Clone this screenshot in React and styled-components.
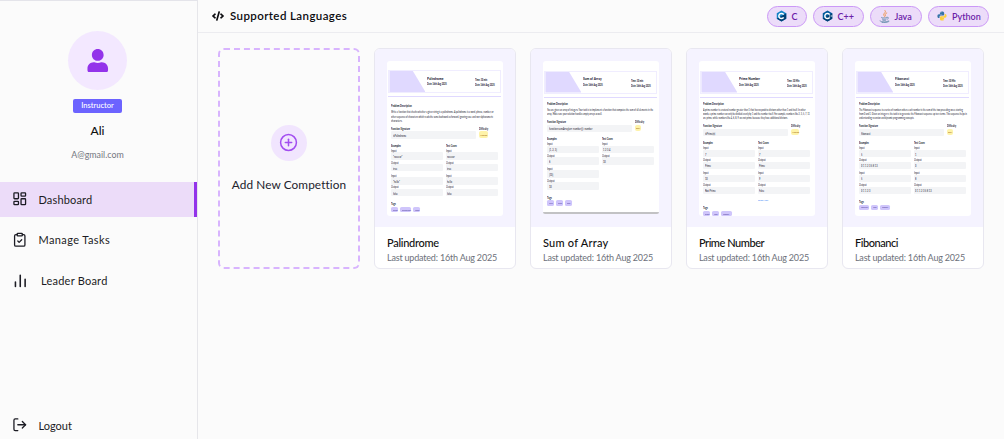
import React from "react";
import styled, { createGlobalStyle } from "styled-components";
import { LayoutDashboard, ClipboardCheck, LogOut, CirclePlus } from "lucide-react";
import { FaUser, FaCode } from "react-icons/fa";

const GlobalStyle = createGlobalStyle`
  * { box-sizing: border-box; }
  body {
    margin: 0;
    background: #fbfbfb;
    font-family: Lato, "Liberation Sans", sans-serif;
    font-variant-ligatures: none;
    color: #1a1a22;
  }
`;

const Page = styled.div`
  display: flex;
  width: 100%;
  height: 439px;
  overflow: hidden;
`;

/* Sidebar */
const Sidebar = styled.aside`
  display: flex;
  flex-direction: column;
  width: 198px;
  flex: none;
  border-top: 1px solid #e4e4ea;
  border-right: 1px solid #e6e6ea;
`;
const Profile = styled.div`
  display: flex;
  flex-direction: column;
  align-items: center;
  height: 181px;
  padding: 30px 2px 0 0;
`;
const Avatar = styled.div`
  display: grid;
  place-items: center;
  width: 59px;
  height: 59px;
  border-radius: 50%;
  background: #f3e8ff;
  color: #9333ea;
`;
const Role = styled.span`
  width: 49px;
  height: 14px;
  margin-top: 9px;
  border-radius: 2px;
  background: #6c63ff;
  color: #fff;
  font-size: 7.5px;
  font-weight: 500;
  line-height: 14px;
  text-align: center;
`;
const Name = styled.strong`
  margin-top: 10px;
  font-size: 12px;
  font-weight: 500;
  line-height: 16px;
  color: #111;
`;
const Email = styled.span`
  margin-top: 10px;
  font-size: 8.9px;
  line-height: 12px;
  color: #74777f;
`;
const Nav = styled.nav`
  display: flex;
  flex-direction: column;
  gap: 5.5px;
  flex: 1;
`;
const NavItem = styled.a`
  display: flex;
  align-items: center;
  gap: ${(p) => p.$gap || 11}px;
  height: 35px;
  padding: 0 0 1px 12px;
  font-size: 11px;
  letter-spacing: ${(p) => p.$ls || 0}px;
  color: #1c1c24;
  background: ${(p) => (p.$active ? "#ecdcf9" : "transparent")};
  border-right: 3px solid ${(p) => (p.$active ? "#9333ea" : "transparent")};
  svg { flex: none; }
`;
const Footer = styled.div`
  height: 31px;
`;

/* Main column */
const Main = styled.main`
  flex: 1;
  display: flex;
  flex-direction: column;
`;
const TopBar = styled.header`
  display: flex;
  align-items: center;
  justify-content: space-between;
  height: 33px;
  padding: 0 15px 0 14px;
  border-bottom: 1px solid #ececf0;
`;
const Heading = styled.h1`
  display: flex;
  align-items: center;
  gap: 6px;
  margin: 0;
  font-size: 11.5px;
  font-weight: 600;
  line-height: 14px;
  padding-bottom: 1px;
  letter-spacing: 0.4px;
  color: #0c0c10;
`;
const Languages = styled.div`
  display: flex;
  gap: 6px;
`;
const Pill = styled.span`
  display: flex;
  align-items: center;
  gap: 5px;
  width: ${(p) => p.$w}px;
  height: 21px;
  padding-left: 8px;
  border: 1px solid #cb98f7;
  border-radius: 11px;
  background: #ecdcf9;
  color: #6b21a8;
  font-size: 9px;
  font-weight: 600;
  white-space: nowrap;
`;
const Grid = styled.section`
  display: grid;
  grid-template-columns: repeat(5, 141.2px);
  column-gap: 14.8px;
  padding: 15px 0 0 20.4px;
`;
const AddCard = styled.button`
  display: flex;
  flex-direction: column;
  align-items: center;
  height: 221px;
  padding: 74.5px 0 0;
  border: 2px dashed #d8b4fe;
  border-radius: 6px;
  background: transparent;
  font: 11.8px Lato, sans-serif;
  letter-spacing: 0.1px;
  color: #22222c;
  white-space: nowrap;
`;
const PlusCircle = styled.span`
  display: grid;
  place-items: center;
  width: 36px;
  height: 36px;
  margin-bottom: 16px;
  border-radius: 50%;
  background: #f1e5fe;
  color: #a24df0;
`;
const Card = styled.article`
  height: 221px;
  border: 1px solid #e8e7f0;
  border-radius: 6px;
  background: #fff;
  overflow: hidden;
`;
const Preview = styled.div`
  height: 178px;
  padding: 12px 11.6px;
  background: #f5f3ff;
`;
const CardTitle = styled.h2`
  margin: 9px 0 0 11.6px;
  font-size: 11px;
  font-weight: 500;
  line-height: 14px;
  letter-spacing: ${(p) => p.$ls || 0}px;
  color: #111;
`;
const Updated = styled.p`
  margin: 2px 0 0 11.6px;
  font-size: 9px;
  line-height: 12px;
  letter-spacing: -0.19px;
  color: #6d717a;
  white-space: nowrap;
`;

/* Miniature problem sheet */
const Sheet = styled.div`
  height: ${(p) => (p.$edge ? 153 : 154.5)}px;
  padding: ${(p) => p.$top}px 1.5px 0;
  border-radius: ${(p) => (p.$edge ? "3px 3px 2px 2px" : "3px")};
  border-bottom: ${(p) => (p.$edge ? "2px solid #c2c2c4" : "none")};
  background: #fff;
  overflow: hidden;
  color: #2a2838;
`;
const Banner = styled.div`
  display: flex;
  height: 23px;
  border: 1px solid #f0edff;
`;
const Slant = styled.div`
  width: 36px;
  background: #e0d9ff;
  clip-path: polygon(0 0, 65% 0, 100% 100%, 0 100%);
`;
const BannerCol = styled.div`
  width: ${(p) => p.$w}px;
  padding: ${(p) => p.$top}px 0 0 ${(p) => p.$left}px;
`;
const Line = styled.div`
  height: ${(p) => p.$h || 4.2}px;
  line-height: ${(p) => p.$h || 4.2}px;
  font-size: ${(p) => p.$size || 3.2}px;
  font-weight: ${(p) => (p.$bold ? 900 : 500)};
  white-space: nowrap;
  width: max-content;
  transform: scaleX(${(p) => p.$sx || 0.82});
  transform-origin: left;
  color: ${(p) => p.$color || "inherit"};
`;
const Rule = styled.div`
  height: 1px;
  margin-top: 3px;
  background: #e0d9ff;
`;
const SheetBody = styled.div`
  padding: ${(p) => p.$top}px 3px 0;
`;
const Description = styled.div`
  margin-top: 1.8px;
`;
const Signature = styled.div`
  display: grid;
  grid-template-columns: 85px 10px;
  column-gap: 2.3px;
  margin-top: 3.6px;
`;
const Field = styled.div`
  height: 7.4px;
  padding: 2.8px 0 0 1.3px;
  border-radius: 1px;
  background: #f3f4f6;
`;
const Level = styled.div`
  width: ${(p) => p.$w}px;
  height: 6.6px;
  padding: 2.4px 0 0 1.3px;
  border-radius: 2px;
  background: #fef3a9;
`;
const Cases = styled.div`
  display: grid;
  grid-template-columns: 52px 52px;
  column-gap: 2.3px;
  margin-top: 5px;
`;
const CaseBlock = styled.div`
  margin-top: ${(p) => p.$top}px;
`;
const Tags = styled.div`
  display: flex;
  gap: 2px;
`;
const Tag = styled.span`
  width: ${(p) => p.$w}px;
  height: 5.4px;
  padding: 1.5px 0 0 1.4px;
  border-radius: 1.6px;
  background: #cfc5fb;
`;
const TagArea = styled.div`
  margin-top: ${(p) => p.$top}px;
`;

const HexLogo = ({ plus }) => (
  <svg width="11" height="12" viewBox="0 0 22 24">
    <path d="M11 1 20.5 6.5v11L11 23 1.5 17.5v-11z" fill={plus ? "#00599c" : "#1684c7"} />
    <path d="M1.5 17.5 20.5 6.5v11L11 23z" fill="#003f74" />
    <path d="M15.3 9.2a5.2 5.2 0 1 0 0 5.6" fill="none" stroke="#fff" strokeWidth="3" />
    {plus && <path d="M14 12h3m1 0h3M15.500 10.500v3m4-3v3" stroke="#fff" strokeWidth="1" />}
  </svg>
);
const JavaLogo = () => (
  <svg width="11" height="13" viewBox="0 0 22 26" fill="none" strokeLinecap="round">
    <path d="M12 1c4 4-5 6-2 10 1 1 1.500 2 1 3M15.500 6c-5 2-3 4-2 6" stroke="#ee8b34" strokeWidth="1.700" />
    <path d="M5 15c3 1.500 8 1.200 11 0M6.500 18c2 1 6 1 8 0M7.500 20.500c2 .8 4.500.8 6 0M17 14.500c4 0 2 3-.5 4M2 22c3 2.500 14 2.500 17 0M6 25c5 .6 11 0 14-2" stroke="#5382a1" strokeWidth="1.400" />
  </svg>
);
const PythonLogo = () => (
  <svg width="10" height="10" viewBox="0 0 24 24">
    <path fill="#3674a8" d="M12 1c-4.500 0-5 1.800-5 3.500V7h5.300v1H4.500C2 8 1 10 1 12.500S2.200 17 4.200 17H6v-2.600C6 12.500 7.600 11 9.500 11h5c1.500 0 2.700-1.200 2.700-2.700V4.500C17.200 2.500 15.500 1 12 1z" />
    <circle cx="9.300" cy="4" r="1" fill="#fff" />
    <path fill="#fccf3d" d="M12 23c4.500 0 5-1.800 5-3.500V17h-5.300v-1h7.800c2.500 0 3.500-2 3.500-4.500S21.800 7 19.800 7H18.400v2.600c0 1.900-1.600 3.200-3.500 3.200h-5c-1.500 0-2.700 1.200-2.700 2.700v4C7.200 21.500 8.500 23 12 23z" />
    <circle cx="14.700" cy="20" r="1" fill="#fff" />
  </svg>
);
const BarsIcon = () => (
  <svg width="15" height="15" viewBox="0 0 24 24" stroke="currentColor" strokeWidth="2.500" strokeLinecap="round">
    <path d="M5.500 21.500v-7M13.200 21.500V3.500M21 21.500V10" />
  </svg>
);

const problems = [
  {
    title: "Palindrome", ls: -0.28, time: "Time: 30 min", date: "Date: 16th Aug 2025", top: 9, bodyTop: 7.3, sx: [0.705, 0.705, 0.78],
    text: [
      "Write a function that checks whether a given string is a palindrome. A palindrome is a word, phrase, number, or",
      "other sequence of characters which reads the same backward as forward, ignoring case and non-alphanumeric",
      "characters.",
    ],
    signature: "isPalindrome", level: "Medium", levelW: 9,
    left: [["Input", '"racecar"'], ["Output", "true"], ["Input", '"hello"'], ["Output", "false"]],
    right: [["Input", "racecar"], ["Output", "true"], ["Input", "hello"], ["Output", "false"]],
    tagTop: 6, tags: [["string", 7], ["palindrome", 11], ["loops", 7]],
  },
  {
    title: "Sum of Array", ls: 0.25, time: "Time: 30 min", date: "Date: 16th Aug 2025", top: 9.5, bodyTop: 4.3, sx: [0.7, 0.7], edge: true,
    text: [
      "You are given an array of integers. Your task is to implement a function that computes the sum of all elements in the",
      "array. Make sure your solution handles empty arrays as well.",
    ],
    signature: "function sumArray(arr: number[]): number", level: "Easy", levelW: 6,
    left: [["Input", "[1, 2, 3]"], ["Output", "6"], ["Input", "[10]"], ["Output", "10"]],
    right: [["Input", "1 2 3 4"], ["Output", "10"]],
    tagTop: 6, tags: [["array", 7], ["math", 7], ["sum", 6.5]],
  },
  {
    title: "Prime Number", ls: -0.45, time: "Time: 30 Min", date: "Date: 16th Aug 2025", top: 9.5, bodyTop: 4.3, sx: [0.705, 0.695, 0.71],
    text: [
      "A prime number is a natural number greater than 1 that has no positive divisors other than 1 and itself. In other",
      "words, a prime number can only be divided evenly by 1 and the number itself. For example, numbers like 2, 3, 5, 7, 11",
      "are prime, while numbers like 4, 6, 8, 9 are not prime because they have additional divisors.",
    ],
    signature: "isPrime(n)", level: "Medium", levelW: 8.5,
    left: [["Input", "7"], ["Output", "Prime"], ["Input", "10"], ["Output", "Not Prime"]],
    right: [["Input", "7"], ["Output", "Prime"], ["Input", "9"], ["Output", "False"]],
    more: true, tagTop: 4, tags: [["prime", 7], ["loop", 7], ["number", 11]],
  },
  {
    title: "Fibonanci", ls: -0.45, time: "Time: 30 Min", date: "Date: 16th Aug 2025", top: 9.5, bodyTop: 4.3, sx: [0.7, 0.7, 0.68],
    text: [
      "The Fibonacci sequence is a series of numbers where each number is the sum of the two preceding ones, starting",
      "from 0 and 1. Given an integer n, the task is to generate the Fibonacci sequence up to n terms. This sequence helps in",
      "understanding recursion and dynamic programming concepts.",
    ],
    signature: "fibonacci", level: "Easy", levelW: 6,
    left: [["Input", "5"], ["Output", "0 1 1 2 3 5 8 13"], ["Input", "5"], ["Output", "0 1 1 2 3"]],
    right: [["Input", "1"], ["Output", "0"], ["Input", "8"], ["Output", "0 1 1 2 3 5 8 13"]],
    tagTop: 6, tags: [["fibonacci", 10], ["loop", 7], ["number", 9.5]],
  },
];

const CaseColumn = ({ title, items, more }) => (
  <div>
    <Line $bold $size={2.8} $h={4}>{title}</Line>
    {items.map(([label, value], i) => (
      <CaseBlock key={i} $top={i === 0 ? 2 : i === 2 ? 3.1 : 1.9}>
        <Line $h={2.6} $size={2.9}>{label}</Line>
        <Field><Line $h={4} $size={2.9}>{value}</Line></Field>
      </CaseBlock>
    ))}
    {more && <CaseBlock $top={4.5}><Line $size={2.6} $h={4} $color="#3b82f6">Read More</Line></CaseBlock>}
  </div>
);

const ProblemSheet = ({ p }) => (
  <Sheet $top={p.top} $edge={p.edge}>
    <Banner>
      <Slant />
      <BannerCol $w={48.5} $top={4.7} $left={1.5}>
        <Line $bold $size={4.3} $h={6.5} $sx={0.75}>{p.title}</Line>
        <Line $bold $size={3.1} $h={5} $sx={0.68}>{p.date}</Line>
      </BannerCol>
      <BannerCol $w={26} $top={6.2} $left={1.5}>
        <Line $bold $size={3.1} $h={6.2} $sx={0.68}>{p.time}</Line>
        <Line $bold $size={3.1} $h={5.4} $sx={0.68}>{p.date}</Line>
      </BannerCol>
    </Banner>
    <Rule />
    <SheetBody $top={p.bodyTop}>
      <Line $bold $size={2.9} $h={4.4} $sx={0.78}>Problem Description</Line>
      <Description>
        {p.text.map((t, i) => <Line key={t} $size={3} $sx={p.sx[i]}>{t}</Line>)}
      </Description>
      <Signature>
        <div>
          <Line $bold $size={2.9} $h={4.6} $sx={0.78}>Function Signature</Line>
          <Field><Line $h={4} $size={2.9}>{p.signature}</Line></Field>
        </div>
        <div>
          <Line $bold $size={2.9} $h={4.6} $sx={0.75}>Difficulty</Line>
          <Level $w={p.levelW}><Line $h={3.6} $size={2.6} $sx={0.75} $color="#a16207">{p.level}</Line></Level>
        </div>
      </Signature>
      <Cases>
        <CaseColumn title="Examples" items={p.left} />
        <CaseColumn title="Test Cases" items={p.right} more={p.more} />
      </Cases>
      <TagArea $top={p.tagTop}>
        <Line $bold $size={2.9} $h={4.6}>Tags</Line>
        <Tags>
          {p.tags.map(([t, w]) => (
            <Tag key={t} $w={w}><Line $h={3.6} $size={2.5} $sx={0.72} $color="#4c3a99">{t}</Line></Tag>
          ))}
        </Tags>
      </TagArea>
    </SheetBody>
  </Sheet>
);

export default function App() {
  return (
    <Page>
      <GlobalStyle />
      <Sidebar>
        <Profile>
          <Avatar><FaUser size={23.5} /></Avatar>
          <Role>Instructor</Role>
          <Name>Ali</Name>
          <Email>A@gmail.com</Email>
        </Profile>
        <Nav>
          <NavItem $active $ls={0.15}><LayoutDashboard size={15.5} />Dashboard</NavItem>
          <NavItem $ls={0.4}><ClipboardCheck size={15.5} />Manage Tasks</NavItem>
          <NavItem $gap={14} $ls={0.23}><BarsIcon />Leader Board</NavItem>
        </Nav>
        <Footer>
          <NavItem as="div"><LogOut size={15.5} />Logout</NavItem>
        </Footer>
      </Sidebar>
      <Main>
        <TopBar>
          <Heading><FaCode size={12} />Supported Languages</Heading>
          <Languages>
            <Pill $w={40}><HexLogo />C</Pill>
            <Pill $w={51}><HexLogo plus />C++</Pill>
            <Pill $w={52.5}><JavaLogo />Java</Pill>
            <Pill $w={61}><PythonLogo />Python</Pill>
          </Languages>
        </TopBar>
        <Grid>
          <AddCard>
            <PlusCircle><CirclePlus size={19} strokeWidth={1.9} /></PlusCircle>
            Add New Compettion
          </AddCard>
          {problems.map((p) => (
            <Card key={p.title}>
              <Preview><ProblemSheet p={p} /></Preview>
              <CardTitle $ls={p.ls}>{p.title}</CardTitle>
              <Updated>Last updated: 16th Aug 2025</Updated>
            </Card>
          ))}
        </Grid>
      </Main>
    </Page>
  );
}
